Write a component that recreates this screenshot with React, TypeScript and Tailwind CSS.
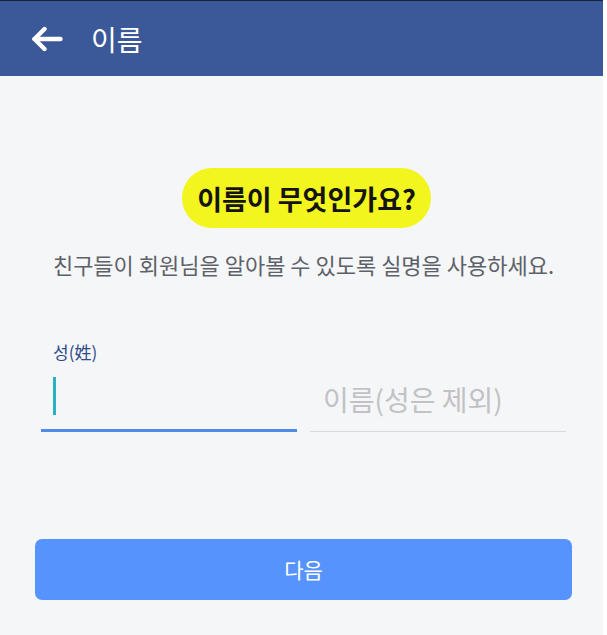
const font = { fontFamily: '"Noto Sans CJK KR", "Noto Sans", sans-serif' };

function BackArrow() {
  return (
    <svg width="32" height="26" viewBox="0 0 32 26" fill="none" stroke="white" strokeWidth="4.4" strokeLinecap="round" strokeLinejoin="round">
      <path d="M29.5 13H3.5" />
      <path d="M13.5 3L3.5 13L13.5 23" />
    </svg>
  );
}

export default function App() {
  return (
    <div className="w-[607px] h-[635px] bg-white flex" style={font}>
      <div className="w-[603px] h-full flex flex-col bg-[#f5f6f8]">
        {/* Header */}
        <div className="h-[76px] shrink-0 bg-[#3b5998] border-t border-[#1c2233] flex items-center pl-[31px]">
          <BackArrow />
          <span className="ml-[28px] text-white text-[28px] leading-none">이름</span>
        </div>

        {/* Title */}
        <div className="flex justify-center pl-[10px] mt-[92px]">
          <div className="h-[60px] px-[15px] rounded-full bg-[#f2f51e] flex items-center">
            <span className="text-[27px] font-bold text-[#141414] leading-none">이름이 무엇인가요?</span>
          </div>
        </div>
        <p className="mt-[25px] pl-[4px] text-center text-[22px] text-[#5d6168] leading-none">
          친구들이 회원님을 알아볼 수 있도록 실명을 사용하세요.
        </p>

        {/* Inputs */}
        <div className="flex gap-[13px] pl-[41px] mt-[68px]">
          <div className="w-[256px]">
            <p className="pl-[12px] text-[17px] text-[#2d4a8c] leading-none">성(姓)</p>
            <div className="h-[63px] mt-[9px] flex items-start pt-[8px] pl-[12px] border-b-[3px] border-[#4d8ceb]">
              <div className="w-[3px] h-[38px] bg-[#2bb2c2]" />
            </div>
          </div>
          <div className="w-[256px] pt-[26px]">
            <div className="h-[63px] flex items-center pl-[13px] pb-[2px] border-b border-[#d9d9d9]">
              <span className="text-[28px] text-[#c2c2c4] leading-none">이름(성은 제외)</span>
            </div>
          </div>
        </div>

        {/* Button */}
        <div className="pl-[35px] pr-[31px] mt-[107px]">
          <button className="w-full h-[61px] rounded-[7px] bg-[#5793fd] text-white text-[21px] flex items-center justify-center">
            다음
          </button>
        </div>
      </div>
    </div>
  );
}
